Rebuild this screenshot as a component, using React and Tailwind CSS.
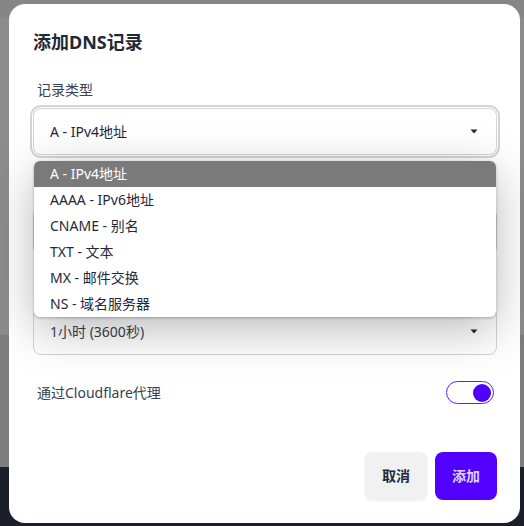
import React from 'react';

const FONT = { fontFamily: '"Noto Sans", "Noto Sans CJK SC", sans-serif' };

// 下拉小三角
function Caret() {
  return (
    <svg width="8" height="5" viewBox="0 0 8 5" className="shrink-0">
      <path d="M0.5 0.5 L7.5 0.5 L4 4.5 Z" fill="#1f2937" />
    </svg>
  );
}

const recordTypes = [
  'A - IPv4地址',
  'AAAA - IPv6地址',
  'CNAME - 别名',
  'TXT - 文本',
  'MX - 邮件交换',
  'NS - 域名服务器',
];

export default function App() {
  return (
    <div className="relative w-[524px] h-[526px] overflow-hidden" style={FONT}>
      {/* 背景页面 + 遮罩 */}
      <div className="flex flex-col h-full">
        <div className="h-[18px] bg-[#868686]"></div>
        <div className="h-[317px] bg-[#8c8c8c]"></div>
        <div className="h-[132px] bg-[#7d7d7d]"></div>
        <div className="flex-1 bg-[#1b1f29]"></div>
      </div>

      {/* 弹窗 */}
      <div className="absolute left-[9px] top-[4px] w-[511px] h-[519px] bg-white rounded-2xl pl-6 pr-[23px] pt-6 pb-[23px] flex flex-col">
        <h2 className="text-lg leading-7 font-bold text-[#1f2937]">添加DNS记录</h2>

        {/* 记录类型 */}
        <div className="mt-6 relative">
          <label className="block pl-1 text-sm leading-5 text-[#374151]">记录类型</label>
          <div className="mt-2 h-[47px] flex items-center justify-between px-4 border border-[#d1d5db] rounded-lg shadow-[0_0_0_1px_#fff,0_0_0_3px_#d4d4d8]">
            <span className="text-sm text-[#1f2937]">A - IPv4地址</span>
            <div className="mr-[2px]"><Caret /></div>
          </div>

          {/* 展开的选项列表 */}
          <div className="absolute left-[1px] right-[1px] top-[81px] z-10 bg-white rounded-md overflow-hidden shadow-[0_12px_48px_rgba(0,0,0,0.28),0_1px_3px_rgba(0,0,0,0.25)]">
            {recordTypes.map((t, i) => (
              <div
                key={t}
                className={`h-[26px] flex items-center pl-4 text-sm ${i === 0 ? 'bg-[#7a7a7a] text-white' : 'text-[#1f2937]'}`}
              >
                {t}
              </div>
            ))}
          </div>
        </div>

        {/* 名称 (被列表遮住) */}
        <div className="mt-[27px]">
          <div className="h-5"></div>
          <div className="mt-[6px] h-[47px] border border-[#d1d5db] rounded-lg"></div>
        </div>

        {/* TTL (上半部分被列表遮住) */}
        <div className="mt-[27px]">
          <div className="h-5"></div>
          <div className="mt-[6px] h-[47px] flex items-center justify-between px-4 border border-[#d1d5db] rounded-lg">
            <span className="text-sm text-[#374151]">1小时 (3600秒)</span>
            <div className="mr-[2px]"><Caret /></div>
          </div>
        </div>

        {/* 代理开关 */}
        <div className="mt-[26px] h-[23px] flex items-center justify-between">
          <span className="pl-1 text-sm text-[#374151]">通过Cloudflare代理</span>
          <div className="w-[48px] h-[23px] rounded-full border-[1.5px] border-[#5b1fff] bg-white flex items-center justify-end pr-[2px] mr-[3px]">
            <div className="w-[18px] h-[18px] rounded-full bg-[#5000ff]"></div>
          </div>
        </div>

        {/* 按钮 */}
        <div className="mt-auto flex justify-end gap-2">
          <button className="w-[62px] h-[48px] rounded-lg bg-[#f1f1f2] text-sm font-bold text-[#1f2937] shadow-[0_1px_3px_rgba(0,0,0,0.08)]">
            取消
          </button>
          <button className="w-[62px] h-[48px] rounded-lg bg-[#5200ff] text-sm font-bold text-[#dcd3ff]">
            添加
          </button>
        </div>
      </div>
    </div>
  );
}
